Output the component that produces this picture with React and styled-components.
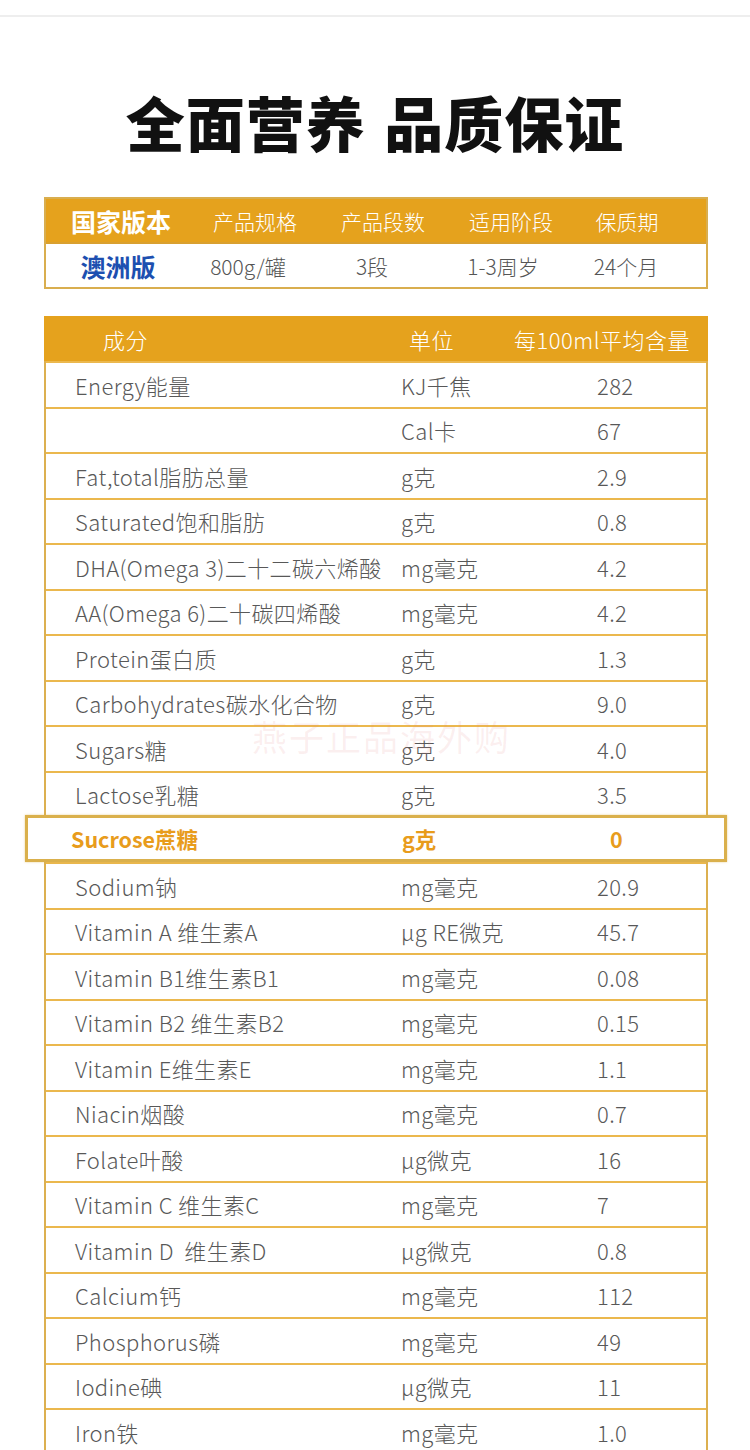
import React from "react";
import styled, { createGlobalStyle } from "styled-components";

const Global = createGlobalStyle`
  html, body { margin: 0; padding: 0; background: #fff; }
  body { font-family: "Noto Sans CJK SC", "Noto Sans", sans-serif; }
`;

const Page = styled.div`
  width: 750px;
  height: 1450px;
  overflow: hidden;
  padding-top: 15px;
  box-sizing: border-box;
`;

const TopLine = styled.div`
  height: 2px;
  background: #eeeeee;
`;

const Title = styled.h1`
  margin: 73px 0 0;
  height: 64px;
  font-size: 59px;
  line-height: 64px;
  font-weight: 900;
  color: #111;
  text-align: center;
  letter-spacing: 1px;
  word-spacing: 4px;
`;

const InfoTable = styled.div`
  margin: 43px 0 0 44px;
  width: 664px;
  box-sizing: border-box;
  border: 2px solid #d9ae4f;
`;

const InfoRow = styled.div`
  display: grid;
  grid-template-columns: ${(p) => p.$cols};
  height: 43px;
  align-items: center;
  background: ${(p) => (p.$head ? "#e5a21d" : "#fff")};
  border-bottom: ${(p) => (p.$head ? "2px solid #d9a030" : "none")};
`;

const InfoCell = styled.div`
  text-align: center;
  font-size: ${(p) => (p.$strong ? 25 : 21)}px;
  font-weight: ${(p) => (p.$strong ? 700 : 300)};
  color: ${(p) => p.$color};
  white-space: nowrap;
`;

const NutriTable = styled.div`
  position: relative;
  margin: 27px 0 0 44px;
  width: 664px;
  box-sizing: border-box;
  border-left: 2px solid #dcb050;
  border-right: 2px solid #dcb050;
`;

const NutriHead = styled.div`
  display: grid;
  grid-template-columns: 355px 105px 1fr;
  height: 45px;
  align-items: center;
  background: #e5a21d;
  margin: 0 -2px;
  color: #fff;
  font-size: 22px;
  font-weight: 300;
  letter-spacing: 0.5px;
`;

const HeadCell = styled.div`
  padding-left: ${(p) => p.$pl}px;
  white-space: nowrap;
`;

const NutriRow = styled.div`
  display: grid;
  grid-template-columns: 355px 196px 1fr;
  height: 45.5px;
  box-sizing: border-box;
  align-items: center;
  border-top: 2px solid #ebb84e;
  font-size: 22px;
  font-weight: 300;
  color: #585858;
  letter-spacing: 0.4px;
`;

const HighlightRow = styled.div`
  position: relative;
  z-index: 2;
  display: grid;
  grid-template-columns: 374px 208px 1fr;
  height: 47px;
  margin: -1px -21px 0 -21px;
  box-sizing: border-box;
  align-items: center;
  border: 3px solid #dab04c;
  background: #fff;
  box-shadow: 0 0 2px rgba(218, 176, 76, 0.6);
  font-size: 21.5px;
  font-weight: 700;
  color: #e89c1c;
`;

const Cell = styled.div`
  padding-left: ${(p) => p.$pl || 0}px;
  white-space: pre;
`;

const Watermark = styled.div`
  position: absolute;
  left: 206px;
  top: 394px;
  font-size: 35px;
  letter-spacing: 2px;
  color: rgba(225, 130, 130, 0.13);
  pointer-events: none;
  white-space: nowrap;
  z-index: 3;
`;

const rows = [
  ["Energy能量", "KJ千焦", "282"],
  ["", "Cal卡", "67"],
  ["Fat,total脂肪总量", "g克", "2.9"],
  ["Saturated饱和脂肪", "g克", "0.8"],
  ["DHA(Omega 3)二十二碳六烯酸", "mg毫克", "4.2"],
  ["AA(Omega 6)二十碳四烯酸", "mg毫克", "4.2"],
  ["Protein蛋白质", "g克", "1.3"],
  ["Carbohydrates碳水化合物", "g克", "9.0"],
  ["Sugars糖", "g克", "4.0"],
  ["Lactose乳糖", "g克", "3.5"],
  ["HIGHLIGHT", "", ""],
  ["Sodium钠", "mg毫克", "20.9"],
  ["Vitamin A 维生素A", "μg RE微克", "45.7"],
  ["Vitamin B1维生素B1", "mg毫克", "0.08"],
  ["Vitamin B2 维生素B2", "mg毫克", "0.15"],
  ["Vitamin E维生素E", "mg毫克", "1.1"],
  ["Niacin烟酸", "mg毫克", "0.7"],
  ["Folate叶酸", "μg微克", "16"],
  ["Vitamin C 维生素C", "mg毫克", "7"],
  ["Vitamin D  维生素D", "μg微克", "0.8"],
  ["Calcium钙", "mg毫克", "112"],
  ["Phosphorus磷", "mg毫克", "49"],
  ["Iodine碘", "μg微克", "11"],
  ["Iron铁", "mg毫克", "1.0"],
];

const infoHeadCols = "150px 118px 138px 118px 114px";
const infoDataCols = "144px 116px 132px 130px 116px";

export default function App() {
  return (
    <Page>
      <Global />
      <TopLine />
      <Title>全面营养 品质保证</Title>
      <InfoTable>
        <InfoRow $head $cols={infoHeadCols}>
          <InfoCell $strong $color="#fff">国家版本</InfoCell>
          <InfoCell $color="#fff">产品规格</InfoCell>
          <InfoCell $color="#fff">产品段数</InfoCell>
          <InfoCell $color="#fff">适用阶段</InfoCell>
          <InfoCell $color="#fff">保质期</InfoCell>
        </InfoRow>
        <InfoRow $cols={infoDataCols}>
          <InfoCell $strong $color="#1d4fb0">澳洲版</InfoCell>
          <InfoCell $color="#555">800g/罐</InfoCell>
          <InfoCell $color="#555">3段</InfoCell>
          <InfoCell $color="#555">1-3周岁</InfoCell>
          <InfoCell $color="#555">24个月</InfoCell>
        </InfoRow>
      </InfoTable>
      <NutriTable>
        <NutriHead>
          <HeadCell $pl={59}>成分</HeadCell>
          <HeadCell $pl={10}>单位</HeadCell>
          <HeadCell $pl={10}>每100ml平均含量</HeadCell>
        </NutriHead>
        {rows.map((r, i) =>
          r[0] === "HIGHLIGHT" ? (
            <HighlightRow key={i}>
              <Cell $pl={43}>Sucrose蔗糖</Cell>
              <Cell $pl={0}>g克</Cell>
              <Cell $pl={0}>0</Cell>
            </HighlightRow>
          ) : (
            <NutriRow key={i}>
              <Cell $pl={29}>{r[0]}</Cell>
              <Cell>{r[1]}</Cell>
              <Cell>{r[2]}</Cell>
            </NutriRow>
          )
        )}
        <Watermark>燕子正品海外购</Watermark>
      </NutriTable>
    </Page>
  );
}
